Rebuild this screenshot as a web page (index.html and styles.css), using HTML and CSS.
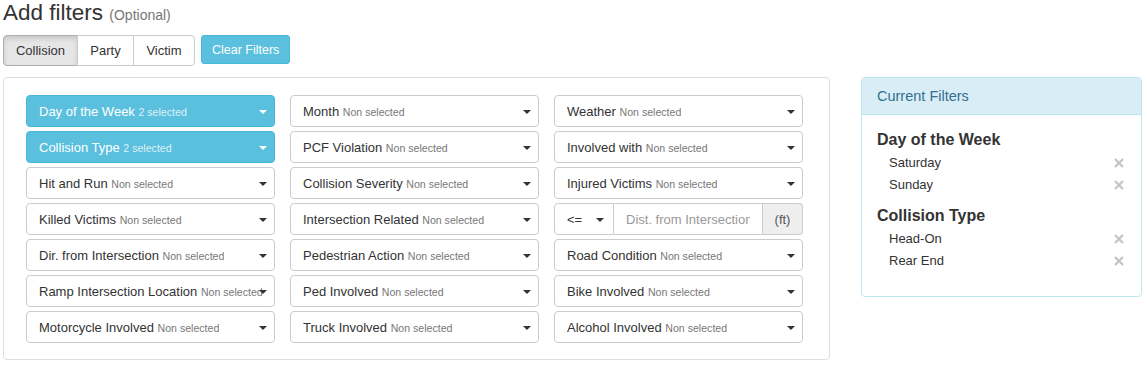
FILE: index.html
```html
<!DOCTYPE html>
<html lang="en">
<head>
  <meta charset="UTF-8">
  <meta name="viewport" content="width=device-width, initial-scale=1.0">
  <title>Add filters</title>
  <link rel="stylesheet" href="styles.css">
</head>
<body>
  <div class="page">
    <h3 class="title">Add filters <small>(Optional)</small></h3>

    <div class="toolbar">
      <div class="btn-group">
        <button class="btn active tab-collision">Collision</button>
        <button class="btn tab-party">Party</button>
        <button class="btn tab-victim">Victim</button>
      </div>
      <button class="btn btn-info">Clear Filters</button>
    </div>

    <div class="layout">
      <!-- Filter selects -->
      <div class="filter-panel">
        <div class="filter-grid">
          <div class="select info"><span class="label">Day of the Week <small>2 selected</small></span><span class="caret"></span></div>
          <div class="select"><span class="label">Month <small>Non selected</small></span><span class="caret"></span></div>
          <div class="select"><span class="label">Weather <small>Non selected</small></span><span class="caret"></span></div>

          <div class="select info"><span class="label">Collision Type <small>2 selected</small></span><span class="caret"></span></div>
          <div class="select"><span class="label">PCF Violation <small>Non selected</small></span><span class="caret"></span></div>
          <div class="select"><span class="label">Involved with <small>Non selected</small></span><span class="caret"></span></div>

          <div class="select"><span class="label">Hit and Run <small>Non selected</small></span><span class="caret"></span></div>
          <div class="select"><span class="label">Collision Severity <small>Non selected</small></span><span class="caret"></span></div>
          <div class="select"><span class="label">Injured Victims <small>Non selected</small></span><span class="caret"></span></div>

          <div class="select"><span class="label">Killed Victims <small>Non selected</small></span><span class="caret"></span></div>
          <div class="select"><span class="label">Intersection Related <small>Non selected</small></span><span class="caret"></span></div>
          <div class="input-group">
            <div class="op-select"><span>&lt;=</span><span class="caret"></span></div>
            <div class="dist-input"><span class="placeholder">Dist. from Intersection</span></div>
            <div class="addon">(ft)</div>
          </div>

          <div class="select"><span class="label">Dir. from Intersection <small>Non selected</small></span><span class="caret"></span></div>
          <div class="select"><span class="label">Pedestrian Action <small>Non selected</small></span><span class="caret"></span></div>
          <div class="select"><span class="label">Road Condition <small>Non selected</small></span><span class="caret"></span></div>

          <div class="select"><span class="label">Ramp Intersection Location <small>Non selected</small></span><span class="caret"></span></div>
          <div class="select"><span class="label">Ped Involved <small>Non selected</small></span><span class="caret"></span></div>
          <div class="select"><span class="label">Bike Involved <small>Non selected</small></span><span class="caret"></span></div>

          <div class="select"><span class="label">Motorcycle Involved <small>Non selected</small></span><span class="caret"></span></div>
          <div class="select"><span class="label">Truck Involved <small>Non selected</small></span><span class="caret"></span></div>
          <div class="select"><span class="label">Alcohol Involved <small>Non selected</small></span><span class="caret"></span></div>
        </div>
      </div>

      <!-- Current filters -->
      <div class="current-panel">
        <div class="current-heading">Current Filters</div>
        <div class="current-body">
          <h4>Day of the Week</h4>
          <ul>
            <li>Saturday <svg class="remove" viewBox="0 0 10 10"><path d="M1 1L9 9M9 1L1 9"/></svg></li>
            <li>Sunday <svg class="remove" viewBox="0 0 10 10"><path d="M1 1L9 9M9 1L1 9"/></svg></li>
          </ul>
          <h4>Collision Type</h4>
          <ul>
            <li>Head-On <svg class="remove" viewBox="0 0 10 10"><path d="M1 1L9 9M9 1L1 9"/></svg></li>
            <li>Rear End <svg class="remove" viewBox="0 0 10 10"><path d="M1 1L9 9M9 1L1 9"/></svg></li>
          </ul>
        </div>
      </div>
    </div>
  </div>
</body>
</html>
```

FILE: styles.css
```css
/* General page styles */
body {
  font-family: "Liberation Sans", Arial, sans-serif;
  margin: 0;
  padding: 0;
  color: #333;
  background-color: #fff;
}

.page {
  padding-left: 3px;
}

.title {
  font-size: 22.5px;
  font-weight: normal;
  line-height: 26px;
  height: 26px;
  margin: 0 0 9px 0;
}

.title small {
  font-size: 14px;
  color: #777;
}

/* Top buttons */
.toolbar {
  display: flex;
  align-items: flex-start;
  gap: 6px;
  margin-bottom: 11px;
}

.btn-group {
  display: flex;
}

.btn {
  font-family: inherit;
  font-size: 13px;
  height: 31px;
  padding: 0;
  background-color: #fff;
  border: 1px solid #ccc;
  color: #333;
  margin: 0;
  cursor: pointer;
}

.btn-group .btn + .btn {
  margin-left: -1px;
}

.btn-group .btn:first-child {
  border-radius: 4px 0 0 4px;
}

.btn-group .btn:last-child {
  border-radius: 0 4px 4px 0;
}

.tab-collision {
  width: 75px;
}

.tab-party {
  width: 57px;
}

.tab-victim {
  width: 62px;
}

.btn.active {
  background-color: #e6e6e6;
  border-color: #adadad;
  box-shadow: inset 0 3px 5px rgba(0, 0, 0, 0.125);
}

.btn-info {
  font-size: 12.5px;
  height: 29px;
  padding: 0 10px;
  background-color: #5bc0de;
  border-color: #46b8da;
  color: #fff;
  border-radius: 3px;
}

/* Main layout */
.layout {
  display: flex;
  align-items: flex-start;
  gap: 31px;
}

.filter-panel {
  width: 827px;
  box-sizing: border-box;
  border: 1px solid #ddd;
  border-radius: 4px;
  padding: 17px 26px 16px 22px;
}

.filter-grid {
  display: grid;
  grid-template-columns: repeat(3, 249px);
  column-gap: 15px;
  row-gap: 4px;
}

.select {
  position: relative;
  height: 32px;
  box-sizing: border-box;
  border: 1px solid #ccc;
  border-radius: 4px;
  padding: 0 7px 0 12px;
  display: flex;
  align-items: center;
  font-size: 13px;
  color: #333;
  background-color: #fff;
}

.select .label {
  white-space: nowrap;
  overflow: hidden;
}

.select small {
  font-size: 10.6px;
  color: #777;
}

.select.info {
  background-color: #5bc0de;
  border-color: #46b8da;
  color: #fff;
}

.select.info small {
  color: rgba(255, 255, 255, 0.8);
}

.caret {
  position: absolute;
  right: 7px;
  top: 14px;
  width: 0;
  height: 0;
  border-top: 4px solid #333;
  border-left: 4px solid transparent;
  border-right: 4px solid transparent;
}

.select.info .caret {
  border-top-color: #fff;
}

/* Distance input group */
.input-group {
  display: flex;
  height: 32px;
  font-size: 13px;
}

.op-select {
  position: relative;
  width: 60px;
  box-sizing: border-box;
  border: 1px solid #ccc;
  border-radius: 4px 0 0 4px;
  padding-left: 12px;
  display: flex;
  align-items: center;
}

.op-select .caret {
  right: 9px;
}

.dist-input {
  width: 149px;
  box-sizing: border-box;
  border: 1px solid #ccc;
  border-left: none;
  padding: 0 12px;
  display: flex;
  align-items: center;
  color: #999;
}

.placeholder {
  white-space: nowrap;
  overflow: hidden;
}

.addon {
  width: 40px;
  box-sizing: border-box;
  border: 1px solid #ccc;
  border-left: none;
  border-radius: 0 4px 4px 0;
  background-color: #eee;
  color: #555;
  display: flex;
  align-items: center;
  justify-content: center;
}

/* Current filters panel */
.current-panel {
  width: 281px;
  box-sizing: border-box;
  border: 1px solid #bce8f1;
  border-radius: 4px;
}

.current-heading {
  background-color: #d9edf7;
  color: #31708f;
  font-size: 14.5px;
  line-height: 16px;
  padding: 10px 15px;
  border-bottom: 1px solid #bce8f1;
  border-radius: 3px 3px 0 0;
}

.current-body {
  padding: 15px 15px 16px 15px;
}

.current-body h4 {
  font-size: 16px;
  font-weight: bold;
  line-height: 20px;
  margin: 0 0 2px 0;
}

.current-body ul {
  list-style: none;
  margin: 0 0 10px 0;
  padding: 0;
}

.current-body ul:last-child {
  margin-bottom: 8px;
}

.current-body li {
  display: flex;
  justify-content: space-between;
  align-items: center;
  font-size: 13px;
  line-height: 22px;
  padding-left: 12px;
}

.remove {
  width: 10px;
  height: 10px;
  margin-right: 2px;
  stroke: #c4c4c4;
  stroke-width: 2.2;
  fill: none;
}
```
